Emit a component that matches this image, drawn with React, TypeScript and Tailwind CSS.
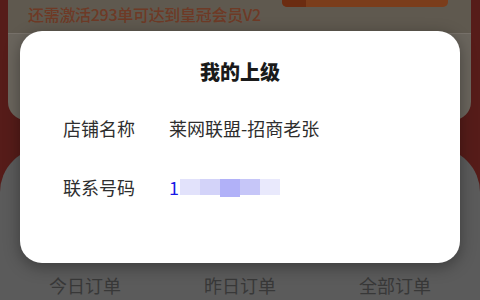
import React from "react";

export default function App() {
  const font = { fontFamily: '"Noto Sans CJK SC", "Noto Sans", sans-serif' };
  return (
    <div className="relative w-[480px] h-[300px] overflow-hidden bg-[#561c19]" style={font}>
      {/* top beige card */}
      <div className="absolute left-[8px] right-[9px] top-[-10px] h-[130px] rounded-b-[18px] bg-[#6a655d]">
        <div className="h-[44px] bg-[#5f594f] border-b border-[#77716a]"></div>
      </div>
      {/* orange bar */}
      <div className="absolute left-[282px] top-[-6px] w-[166px] h-[13px] rounded-[5px] bg-[#7b3d1b] overflow-hidden flex">
        <div className="w-[24px] h-full bg-[#6b2c11]"></div>
      </div>
      <div className="absolute left-[28px] top-[3px] text-[16px] leading-[22px] text-[#6e3a26] font-medium tracking-[-0.3px]">
        还需激活293单可达到皇冠会员V2
      </div>
      {/* bottom gray card */}
      <div className="absolute left-0 right-0 top-[148px] bottom-0 rounded-t-[44px] bg-[#5b5b5b]">
        <div className="absolute left-0 right-0 bottom-0 h-[30px] flex items-center justify-between px-[49px] text-[18px] text-[#383838]">
          <span>今日订单</span>
          <span>昨日订单</span>
          <span>全部订单</span>
        </div>
      </div>
      {/* modal */}
      <div className="absolute left-[20px] top-[31px] w-[440px] h-[232px] rounded-[22px] bg-white shadow-[0_4px_16px_rgba(0,0,0,0.35)]">
        <div className="pt-[28px] text-center text-[20px] leading-[26px] font-black text-[#1a1a1a]">我的上级</div>
        <div className="mt-[30px] flex items-center text-[18px] leading-[26px] text-[#2e2e2e]">
          <span className="ml-[43px] w-[106px]">店铺名称</span>
          <span>莱网联盟-招商老张</span>
        </div>
        <div className="mt-[33px] flex items-center text-[18px] leading-[26px] text-[#2e2e2e]">
          <span className="text-[#2e2e2e] ml-[43px] w-[106px]">联系号码</span>
          <span className="text-[#1a1ae6] w-[11px]">1</span>
          <div className="flex items-start h-[18px] mt-[2px]">
            <div className="w-[20px] h-[16px] bg-[#e2e2fb]"></div>
            <div className="w-[20px] h-[16px] bg-[#d3d3f9]"></div>
            <div className="w-[20px] h-[18px] bg-[#b1b1f8]"></div>
            <div className="w-[20px] h-[16px] bg-[#c6c6f8]"></div>
            <div className="w-[20px] h-[16px] bg-[#e9e9fc]"></div>
          </div>
        </div>
      </div>
    </div>
  );
}
